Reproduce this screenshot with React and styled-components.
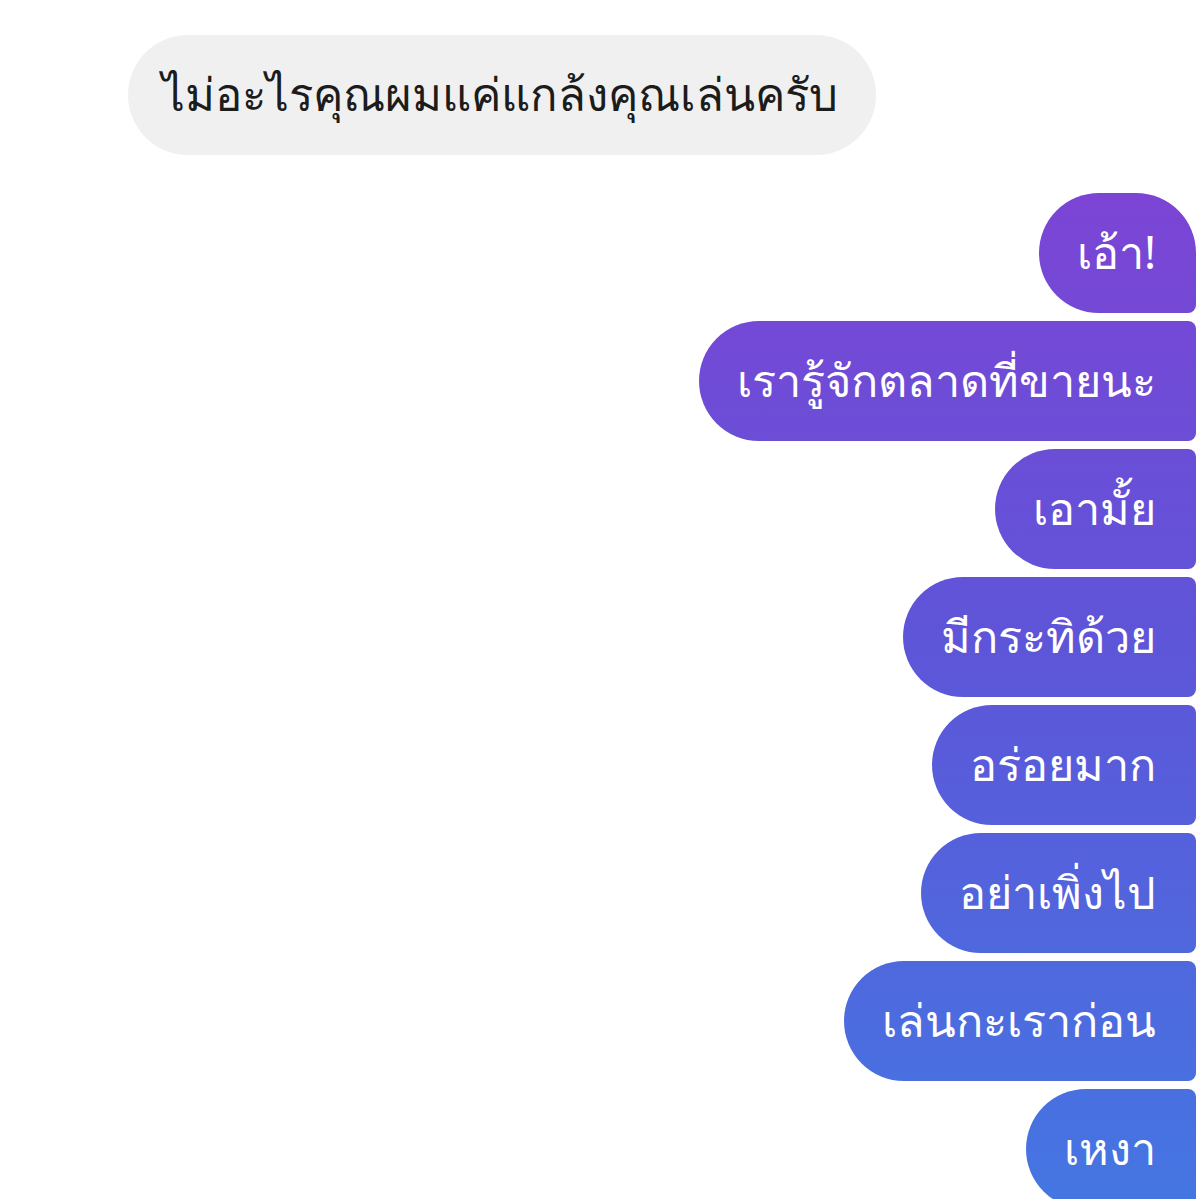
import React from "react";
import styled, { createGlobalStyle } from "styled-components";

const Global = createGlobalStyle`
  html, body { margin: 0; padding: 0; background: #ffffff; }
  body { font-family: "Noto Sans", "DejaVu Sans", sans-serif; overflow: hidden; }
`;

const Page = styled.div`
  width: 1200px;
  height: 1199px;
  overflow: hidden;
  display: flex;
  flex-direction: column;
  padding-top: 35px;
  box-sizing: border-box;
`;

const Incoming = styled.div`
  flex-shrink: 0;
  align-self: flex-start;
  margin-left: 128px;
  height: 120px;
  box-sizing: border-box;
  padding: 0 38px 0 34px;
  display: flex;
  align-items: center;
  background: #f0f0f0;
  border-radius: 60px;
  color: #1c1c1c;
  font-size: 45.5px;
  white-space: nowrap;
`;

const Outgoing = styled.div`
  flex-shrink: 0;
  margin-top: 38px;
  display: flex;
  flex-direction: column;
  align-items: flex-end;
  gap: 8px;
  padding-right: 4px;
`;

const Bubble = styled.div`
  flex-shrink: 0;
  height: 120px;
  box-sizing: border-box;
  padding: 0 40px 0 38px;
  display: flex;
  align-items: center;
  color: #ffffff;
  font-size: 45px;
  white-space: nowrap;
  border-radius: 60px ${(p) => (p.$first ? "60px" : "8px")} 8px 60px;
  background-image: linear-gradient(180deg, #7c43d5 0px, #7c44d5 190px, #5e55d8 640px, #4476e2 1199px);
  background-attachment: fixed;
  background-size: 1200px 1199px;
`;

const messages = [
  "เอ้า!",
  "เรารู้จักตลาดที่ขายนะ",
  "เอามั้ย",
  "มีกระทิด้วย",
  "อร่อยมาก",
  "อย่าเพิ่งไป",
  "เล่นกะเราก่อน",
  "เหงา",
];

export default function App() {
  return (
    <>
      <Global />
      <Page>
        <Incoming>ไม่อะไรคุณผมแค่แกล้งคุณเล่นครับ</Incoming>
        <Outgoing>
          {messages.map((m, i) => (
            <Bubble key={i} $first={i === 0}>
              {m}
            </Bubble>
          ))}
        </Outgoing>
      </Page>
    </>
  );
}
